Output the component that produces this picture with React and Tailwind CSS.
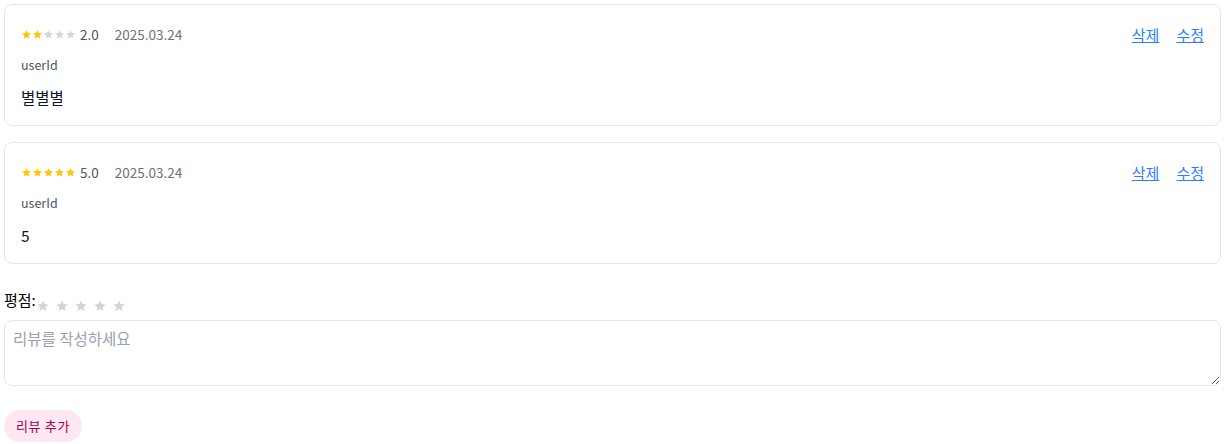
import { useState } from "react";

const font = { fontFamily: '"Noto Sans CJK KR", "Noto Sans", sans-serif' };

function Star({ className }) {
  return (
    <svg viewBox="0 0 24 24" className={className} fill="currentColor">
      <path d="M12 2.5l2.9 6.1 6.6.8-4.9 4.6 1.3 6.6L12 17.3l-5.9 3.3 1.3-6.6-4.9-4.6 6.6-.8z" />
    </svg>
  );
}

const reviews = [
  { id: 1, rating: 2, date: "2025.03.24", user: "userId", content: "별별별" },
  { id: 2, rating: 5, date: "2025.03.24", user: "userId", content: "5" },
];

export default function App() {
  const [text, setText] = useState("");

  return (
    <div className="pl-1 pr-2 pt-1 bg-white min-h-screen" style={font}>
      {reviews.map((r) => (
        <div key={r.id} className="border border-gray-200 rounded-lg px-4 pt-5 pb-4 mb-4">
          <div className="flex items-center justify-between h-5">
            <div className="flex items-center -mt-[2px]">
              <div className="flex items-center">
                {[1, 2, 3, 4, 5].map((i) => (
                  <Star
                    key={i}
                    className={`w-[11px] h-[11px] ${i <= r.rating ? "text-yellow-400" : "text-gray-300"}`}
                  />
                ))}
              </div>
              <span className="ml-[4px] text-[13.5px] text-gray-600">{r.rating.toFixed(1)}</span>
              <span className="ml-4 text-[13.5px] text-gray-500">{r.date}</span>
            </div>
            <div className="flex items-center gap-[17px] text-[15px] text-blue-500">
              <button className="underline">삭제</button>
              <button className="underline">수정</button>
            </div>
          </div>
          <div className="mt-3 text-[12.5px] leading-4 text-gray-600">{r.user}</div>
          <div className="mt-3 text-[15.5px] leading-6 text-gray-900">{r.content}</div>
        </div>
      ))}

      <div className="mt-6 flex items-end">
        <span className="text-[15px] leading-6 text-black">평점:</span>
        <div className="flex items-center gap-[5px] mb-[-1px]">
          {[1, 2, 3, 4, 5].map((i) => (
            <Star key={i} className="w-[14px] h-[14px] text-gray-300" />
          ))}
        </div>
      </div>
      <textarea
        className="mt-2 block w-full h-[66px] border border-gray-200 rounded-lg px-2 pt-[6px] pb-2 text-[15.5px] text-gray-800 placeholder:text-gray-400 outline-none"
        placeholder="리뷰를 작성하세요"
        value={text}
        onChange={(e) => setText(e.target.value)}
      />
      <button className="mt-6 h-8 px-3 rounded-full bg-pink-100 text-[13px] tracking-wider text-pink-800">리뷰 추가</button>
    </div>
  );
}
